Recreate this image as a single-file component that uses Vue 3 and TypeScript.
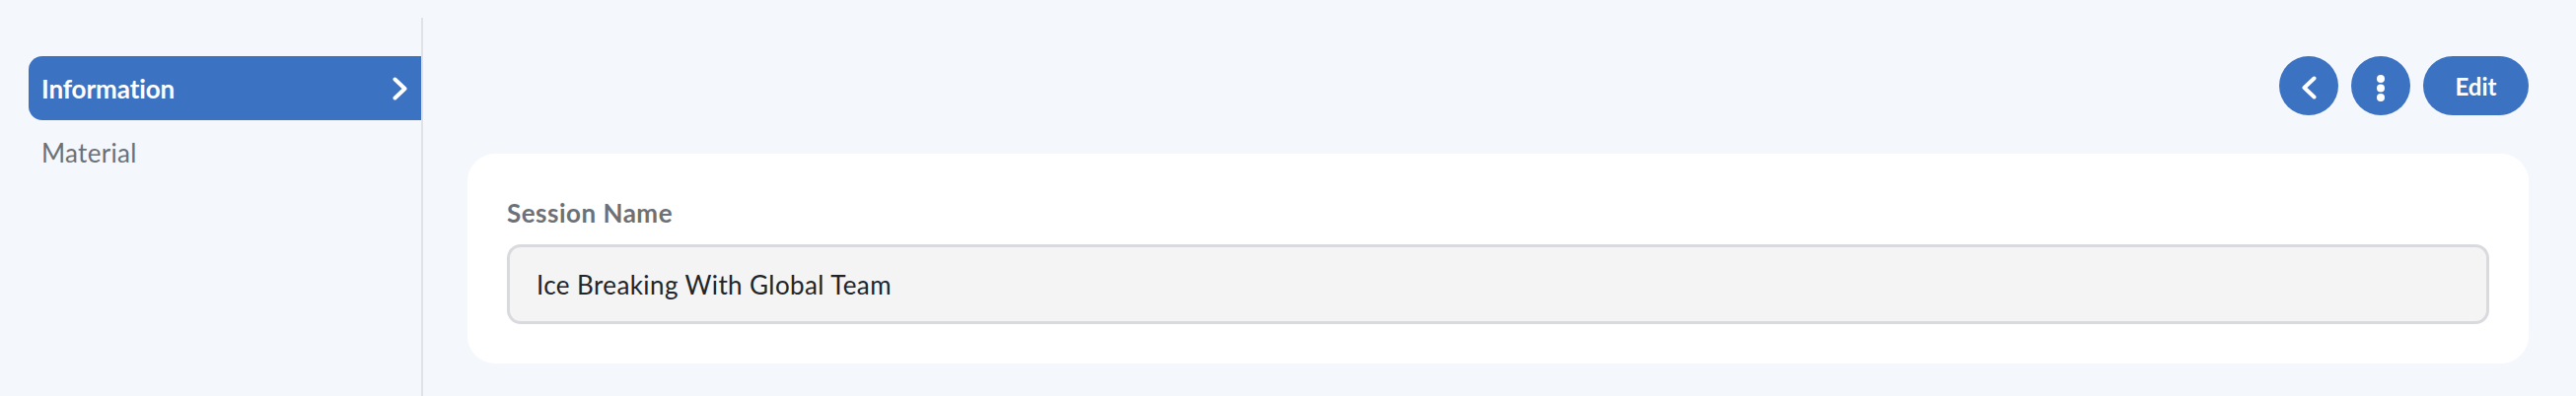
<script setup lang="ts">
const name: string = 'Ice Breaking With Global Team'
</script>

<template>
  <div class="page">
    <aside class="side">
      <div class="item active">
        <span>Information</span>
        <svg class="chev" width="15" height="24" viewBox="0 0 15 24" fill="none"><path d="M2.5 2.5L12.5 12 2.5 21.5" stroke="#fff" stroke-width="4" stroke-linecap="round" stroke-linejoin="round"/></svg>
      </div>
      <div class="item">Material</div>
    </aside>
    <main class="main">
      <div class="actions">
        <button class="btn round" aria-label="Back">
          <svg width="15" height="24" viewBox="0 0 15 24" fill="none"><path d="M12.5 2.5L2.5 12l10 9.5" stroke="#fff" stroke-width="4" stroke-linecap="round" stroke-linejoin="round"/></svg>
        </button>
        <button class="btn round" aria-label="More">
          <svg width="8" height="27" viewBox="0 0 8 27" fill="#fff"><circle cx="4" cy="4" r="4"/><circle cx="4" cy="13.5" r="4"/><circle cx="4" cy="23" r="4"/></svg>
        </button>
        <button class="btn edit">Edit</button>
      </div>
      <section class="card">
        <label class="label">Session Name</label>
        <div class="input">{{ name }}</div>
      </section>
    </main>
  </div>
</template>

<style>
html, body { margin: 0; background: #f4f7fc; }
</style>

<style scoped>
.page {
  display: flex;
  width: 2612px;
  height: 402px;
  box-sizing: border-box;
  padding-top: 18px;
  background: #f4f7fc;
  font-family: "Lato", "Noto Sans", sans-serif;
  overflow: hidden;
}
.side {
  width: 429px;
  box-sizing: border-box;
  padding: 39px 0 0 29px;
  border-right: 2px solid #e0e2e8;
}
.item {
  height: 65px;
  display: flex;
  align-items: center;
  justify-content: space-between;
  padding: 0 14px 0 13px;
  box-sizing: border-box;
  font-size: 26px;
  letter-spacing: 0.3px;
  color: #6c7178;
}
.item.active {
  background: #3c72c2;
  color: #fff;
  font-weight: 700;
  letter-spacing: -0.1px;
  border-radius: 14px 0 0 14px;
}
.main {
  flex: 1;
  padding: 39px 48px 0 45px;
}
.actions {
  display: flex;
  justify-content: flex-end;
  gap: 13px;
  height: 60px;
  margin-bottom: 39px;
}
.btn {
  height: 60px;
  border: 0;
  padding: 0;
  background: #3c72c2;
  color: #fff;
  font-family: inherit;
  display: flex;
  align-items: center;
  justify-content: center;
}
.round { width: 60px; border-radius: 50%; padding-top: 4px; }
.edit { width: 107px; border-radius: 30px; font-size: 24px; font-weight: 700; }
.card {
  height: 213px;
  box-sizing: border-box;
  background: #fff;
  border-radius: 28px;
  padding: 45px 40px 0 40px;
}
.label {
  display: block;
  font-size: 26px;
  line-height: 30px;
  font-weight: 700;
  letter-spacing: 0.5px;
  color: #6c7178;
  margin-bottom: 17px;
}
.input {
  height: 81px;
  box-sizing: border-box;
  display: flex;
  align-items: center;
  padding: 0 27px;
  border: 3px solid #d8dade;
  border-radius: 14px;
  background: #f4f4f4;
  font-size: 26px;
  letter-spacing: 0.4px;
  color: #212529;
}
</style>
